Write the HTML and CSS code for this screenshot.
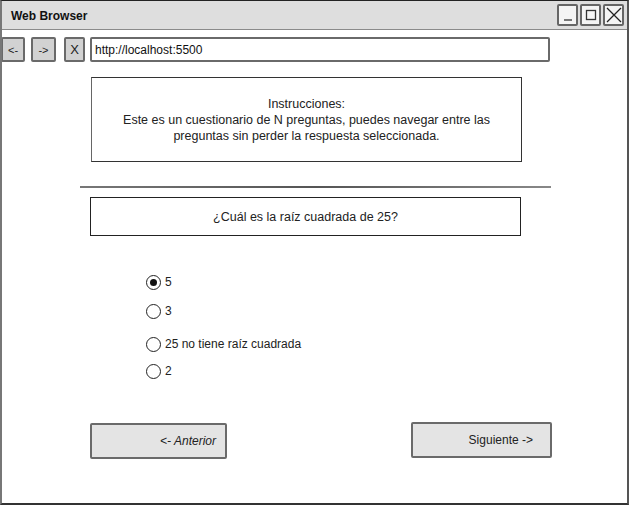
FILE: index.html
```html
<!DOCTYPE html>
<html lang="es">
<head>
<meta charset="utf-8">
<title>Web Browser</title>
<link rel="stylesheet" href="styles.css">
</head>
<body>
<div class="window">
  <div class="titlebar">
    <span class="title">Web Browser</span>
    <div class="winctrls">
      <span class="wbtn"><svg width="12" height="12" viewBox="0 0 12 12"><line x1="2" y1="11" x2="10" y2="11" stroke="#333" stroke-width="1.3"/></svg></span>
      <span class="wbtn"><svg width="12" height="12" viewBox="0 0 12 12"><rect x="1.5" y="1.5" width="9" height="9" fill="none" stroke="#333" stroke-width="1.3"/></svg></span>
      <span class="wbtn"><svg width="16" height="16" viewBox="0 0 16 16"><path d="M1 1 L15 15 M15 1 L1 15" stroke="#222" stroke-width="1.3"/></svg></span>
    </div>
  </div>
  <div class="toolbar">
    <span class="nav nav-back">&lt;-</span>
    <span class="nav nav-fwd">-&gt;</span>
    <span class="nav nav-x">X</span>
    <div class="url">http://localhost:5500</div>
  </div>
  <div class="content">
    <div class="instructions">
      Instrucciones:<br>
      Este es un cuestionario de N preguntas, puedes navegar entre las<br>
      preguntas sin perder la respuesta seleccionada.
    </div>
    <div class="rule"></div>
    <div class="question">¿Cuál es la raíz cuadrada de 25?</div>
    <div class="options">
      <div class="opt opt1"><span class="radio checked"></span>5</div>
      <div class="opt opt2"><span class="radio"></span>3</div>
      <div class="opt opt3"><span class="radio"></span>25 no tiene raíz cuadrada</div>
      <div class="opt opt4"><span class="radio"></span>2</div>
    </div>
    <div class="buttons">
      <span class="btn btn-prev">&lt;- Anterior</span>
      <span class="btn btn-next">Siguiente -&gt;</span>
    </div>
  </div>
</div>
</body>
</html>
```
FILE: styles.css
```css
* { box-sizing: border-box; }
html, body { margin: 0; padding: 0; background: #fff; }
body {
  font-family: "Liberation Sans", Arial, sans-serif;
  font-size: 12px;
  color: #222;
}
.window {
  width: 629px;
  height: 505px;
  border-top: 1px solid #222;
  border-left: 2px solid #777;
  border-right: 2px solid #555;
  border-bottom: 2px solid #333;
  display: flex;
  flex-direction: column;
  overflow: hidden;
}
.titlebar {
  height: 29px;
  background: #dedede;
  border-bottom: 1px solid #8a8a8a;
  display: flex;
  align-items: flex-start;
  justify-content: space-between;
  flex: none;
}
.title {
  font-weight: bold;
  font-size: 12px;
  margin: 8px 0 0 9px;
  color: #111;
}
.winctrls {
  display: flex;
  gap: 2px;
  margin: 3px 3px 0 0;
}
.wbtn {
  width: 21px;
  height: 22px;
  border: 2px solid #666;
  border-radius: 2px;
  background: #f4f4f4;
  display: flex;
  align-items: center;
  justify-content: center;
}
.toolbar {
  display: flex;
  align-items: stretch;
  margin-top: 7px;
  height: 25px;
  flex: none;
}
.nav {
  background: #d2d2d2;
  border: 2px solid #6a6a6a;
  border-radius: 2px;
  display: flex;
  align-items: center;
  justify-content: center;
  font-size: 11px;
  color: #222;
}
.nav-back { width: 24px; margin-left: -1px; }
.nav-fwd { width: 25px; margin-left: 6px; }
.nav-x { width: 21px; margin-left: 8px; font-size: 13px; }
.url {
  margin-left: 5px;
  width: 460px;
  border: 2px solid #6a6a6a;
  border-radius: 2px;
  background: #fff;
  display: flex;
  align-items: center;
  padding-left: 3px;
  font-size: 12px;
  color: #111;
}
.content {
  display: flex;
  flex-direction: column;
  flex: 1;
}
.instructions {
  margin: 15px 0 0 89px;
  width: 431px;
  height: 85px;
  border: 1px solid #333;
  border-left-color: #666;
  text-align: center;
  line-height: 16px;
  padding-top: 18px;
  font-size: 12.5px;
}
.rule {
  margin: 24px 0 0 78px;
  width: 471px;
  height: 2px;
  background: linear-gradient(to right, #777, #555 50%, #888);
}
.question {
  margin: 9px 0 0 88px;
  width: 431px;
  height: 39px;
  border: 1px solid #222;
  display: flex;
  align-items: center;
  justify-content: center;
  font-size: 12.5px;
}
.options {
  display: flex;
  flex-direction: column;
  margin: 38px 0 0 144px;
}
.opt {
  display: flex;
  align-items: center;
  height: 16px;
  font-size: 12px;
}
.opt2 { margin-top: 13px; }
.opt3 { margin-top: 17px; }
.opt4 { margin-top: 11px; }
.radio {
  width: 15px;
  height: 15px;
  border: 1.5px solid #222;
  border-radius: 50%;
  margin-right: 4px;
  display: flex;
  align-items: center;
  justify-content: center;
  background: #fff;
}
.radio.checked::after {
  content: "";
  width: 7px;
  height: 7px;
  border-radius: 50%;
  background: #111;
}
.buttons {
  display: flex;
  justify-content: space-between;
  margin: 43px 0 0 88px;
  width: 462px;
  align-items: flex-start;
}
.btn {
  background: #e4e4e4;
  border: 2px solid #6a6a6a;
  border-radius: 2px;
  display: flex;
  align-items: center;
  justify-content: flex-end;
  font-size: 12px;
  color: #222;
}
.btn-prev {
  width: 137px;
  height: 36px;
  margin-top: 1px;
  padding-right: 9px;
  font-style: italic;
}
.btn-next {
  width: 141px;
  height: 36px;
  padding-right: 17px;
}
```
